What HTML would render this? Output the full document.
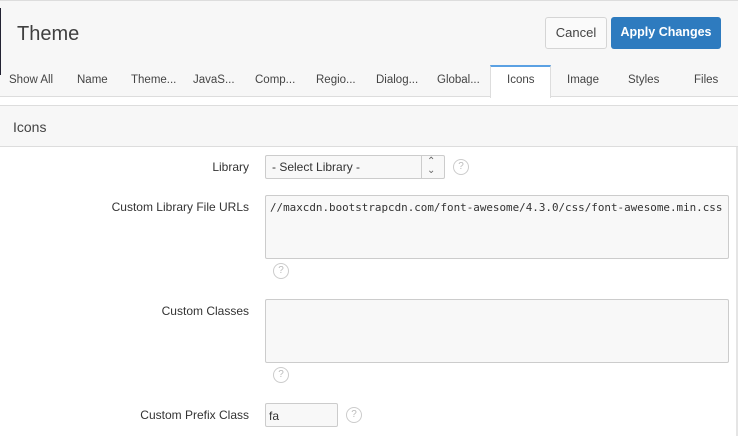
<!DOCTYPE html>
<html><head><style>
*{box-sizing:border-box;margin:0;padding:0}
body{width:738px;height:436px;overflow:hidden;background:#fff;font-family:"Liberation Sans",sans-serif;color:#333;position:relative}
.a{position:absolute}
.hdr{left:0;top:0;width:738px;height:97px;background:#f7f7f7;border-top:1px solid #ddd;border-bottom:1px solid #ddd}
.title{left:17px;top:23px;font-size:20px;color:#404040}
.btn{top:17px;height:32px;border-radius:3px;font-size:13px;line-height:30px;text-align:center}
.tab{top:74px;font-size:11.5px;color:#444;text-align:center}
.sec{left:0;top:105px;width:738px;height:42px;background:#f7f7f7;border-top:1px solid #ddd;border-bottom:1px solid #ddd;font-size:14px;padding:13px 0 0 13px;color:#444}
.lbl{font-size:12px;color:#333;text-align:right;right:489px}
.fld{background:#f8f8f8;border:1px solid #ccc;border-radius:2px}
.help{width:16px;height:16px;border:1px solid #ccc;border-radius:50%;font-size:10px;color:#bbb;text-align:center;line-height:14px}
</style></head><body>
<div class="a hdr"></div>
<div class="a" style="left:0;top:8px;width:1px;height:67px;background:#223"></div>
<div class="a title">Theme</div>
<div class="a btn" style="left:545px;width:62px;border:1px solid #d5d5d5;background:#fafafa;color:#444">Cancel</div>
<div class="a btn" style="left:611px;width:110px;background:#2e7bbf;color:#fff;font-weight:bold;font-size:12.5px">Apply Changes</div>
<div class="a" style="left:490px;top:65px;width:61px;height:33px;background:#fff;border-top:2px solid #5ba1e3;border-left:1px solid #ddd;border-right:1px solid #ddd"></div>
<div class="a tab" style="left:9px">Show All</div>
<div class="a tab" style="left:77px">Name</div>
<div class="a tab" style="left:131px">Theme...</div>
<div class="a tab" style="left:193px">JavaS...</div>
<div class="a tab" style="left:255px">Comp...</div>
<div class="a tab" style="left:316px">Regio...</div>
<div class="a tab" style="left:376px">Dialog...</div>
<div class="a tab" style="left:437px">Global...</div>
<div class="a tab" style="left:507px">Icons</div>
<div class="a tab" style="left:567px">Image</div>
<div class="a tab" style="left:628px">Styles</div>
<div class="a tab" style="left:694px">Files</div>
<div class="a sec">Icons</div>
<div class="a" style="left:736px;top:147px;width:2px;height:289px;background:#e5e5e5"></div>

<div class="a lbl" style="top:160px">Library</div>
<div class="a fld" style="left:265px;top:155px;width:180px;height:24px;font-size:12px;padding:4px 6px">- Select Library -</div>
<div class="a" style="left:421px;top:156px;width:1px;height:22px;background:#ccc"></div>
<div class="a" style="left:427px;top:157px;font-size:10px;color:#666;line-height:9px">&#8963;<br>&#8964;</div>
<div class="a help" style="left:453px;top:159px">?</div>

<div class="a lbl" style="top:200px">Custom Library File URLs</div>
<div class="a fld" style="left:265px;top:195px;width:464px;height:64px;font-family:'DejaVu Sans Mono','Liberation Mono',monospace;font-size:10.9px;padding:5px 4px;color:#333;white-space:nowrap;overflow:hidden">//maxcdn.bootstrapcdn.com/font-awesome/4.3.0/css/font-awesome.min.css</div>
<div class="a help" style="left:273px;top:263px">?</div>

<div class="a lbl" style="top:304px">Custom Classes</div>
<div class="a fld" style="left:265px;top:299px;width:464px;height:64px"></div>
<div class="a help" style="left:273px;top:367px">?</div>

<div class="a lbl" style="top:408px">Custom Prefix Class</div>
<div class="a fld" style="left:265px;top:403px;width:73px;height:24px;font-size:12px;padding:5px 3px">fa</div>
<div class="a help" style="left:346px;top:407px">?</div>
</body></html>
